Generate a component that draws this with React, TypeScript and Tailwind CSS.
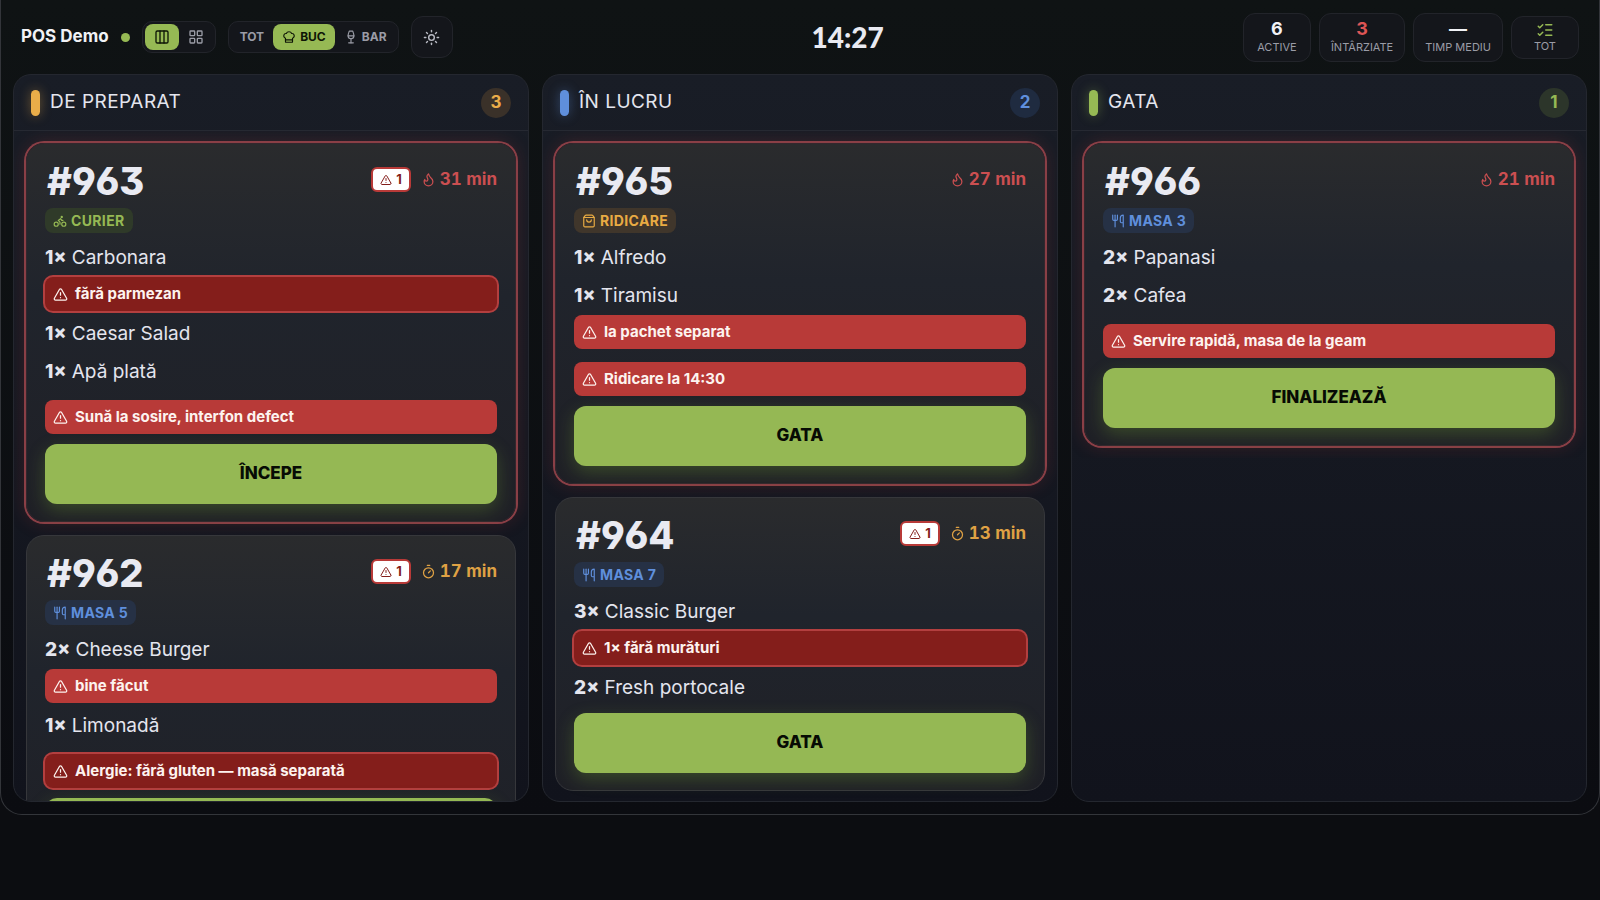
import React from "react";
import {
  Bike,
  ChefHat,
  Columns3,
  Flame,
  LayoutGrid,
  ListChecks,
  LucideIcon,
  ShoppingBag,
  Sun,
  Timer,
  TriangleAlert,
  Utensils,
  Wine,
} from "lucide-react";

type Note = { text: string; critical?: boolean };

type Order = {
  id: number;
  minutes: number;
  late?: boolean;
  alerts?: number;
  type: "courier" | "pickup" | "table";
  label: string;
  items: { qty: number; name: string; note?: Note }[];
  note?: Note;
  action: string;
};

type Column = {
  title: string;
  bar: string;
  count: string;
  orders: Order[];
  total: number;
};

const orderTypes: Record<Order["type"], { icon: LucideIcon; style: string }> = {
  courier: { icon: Bike, style: "bg-[#2f3a29] text-[#96b954]" },
  pickup: { icon: ShoppingBag, style: "bg-[#40362b] text-[#e9ab43]" },
  table: { icon: Utensils, style: "bg-[#263145] text-[#5f8fdc]" },
};

const columns: Column[] = [
  {
    title: "DE PREPARAT",
    bar: "bg-[#eaad49] shadow-[0_0_12px_rgba(234,173,73,0.4)]",
    count: "bg-[#3a3129] text-[#eaad49]",
    total: 3,
    orders: [
      {
        id: 963,
        minutes: 31,
        late: true,
        alerts: 1,
        type: "courier",
        label: "CURIER",
        items: [
          { qty: 1, name: "Carbonara", note: { text: "fără parmezan", critical: true } },
          { qty: 1, name: "Caesar Salad" },
          { qty: 1, name: "Apă plată" },
        ],
        note: { text: "Sună la sosire, interfon defect" },
        action: "ÎNCEPE",
      },
      {
        id: 962,
        minutes: 17,
        alerts: 1,
        type: "table",
        label: "MASA 5",
        items: [
          { qty: 2, name: "Cheese Burger", note: { text: "bine făcut" } },
          { qty: 1, name: "Limonadă" },
        ],
        note: { text: "Alergie: fără gluten — masă separată", critical: true },
        action: "ÎNCEPE",
      },
    ],
  },
  {
    title: "ÎN LUCRU",
    bar: "bg-[#5f8fdc] shadow-[0_0_12px_rgba(95,143,220,0.4)]",
    count: "bg-[#1f2b40] text-[#5f8fdc]",
    total: 2,
    orders: [
      {
        id: 965,
        minutes: 27,
        late: true,
        type: "pickup",
        label: "RIDICARE",
        items: [
          { qty: 1, name: "Alfredo" },
          { qty: 1, name: "Tiramisu", note: { text: "la pachet separat" } },
        ],
        note: { text: "Ridicare la 14:30" },
        action: "GATA",
      },
      {
        id: 964,
        minutes: 13,
        alerts: 1,
        type: "table",
        label: "MASA 7",
        items: [
          { qty: 3, name: "Classic Burger", note: { text: "1× fără murături", critical: true } },
          { qty: 2, name: "Fresh portocale" },
        ],
        action: "GATA",
      },
    ],
  },
  {
    title: "GATA",
    bar: "bg-[#96b954] shadow-[0_0_12px_rgba(150,185,84,0.4)]",
    count: "bg-[#2c352a] text-[#96b954]",
    total: 1,
    orders: [
      {
        id: 966,
        minutes: 21,
        late: true,
        type: "table",
        label: "MASA 3",
        items: [
          { qty: 2, name: "Papanasi" },
          { qty: 2, name: "Cafea" },
        ],
        note: { text: "Servire rapidă, masa de la geam" },
        action: "FINALIZEAZĂ",
      },
    ],
  },
];

const stats = [
  { value: "6", label: "ACTIVE", color: "text-[#f1f2f6]" },
  { value: "3", label: "ÎNTÂRZIATE", color: "text-[#dd5555]" },
  { value: "—", label: "TIMP MEDIU", color: "text-[#f1f2f6]" },
];

const NoteBar: React.FC<{ note: Note }> = ({ note }) => (
  <div
    className={`flex h-[34px] items-center gap-[7px] rounded-lg px-2 text-[15px] font-bold text-[#fdf3ef] ${
      note.critical ? "bg-[#841e1b] ring-2 ring-[#b33f3f]" : "bg-[#b83a38]"
    }`}
  >
    <TriangleAlert size={15} />
    <span>{note.text}</span>
  </div>
);

const OrderCard: React.FC<{ order: Order }> = ({ order }) => {
  const { icon: TypeIcon, style } = orderTypes[order.type];
  const TimeIcon = order.late ? Flame : Timer;

  return (
    <article
      className={`flex shrink-0 flex-col gap-2.5 rounded-[18px] border bg-linear-to-b from-[#2a2b2d] via-[#20242c] via-40% to-[#1f2026] px-[18px] py-[17px] ${
        order.late
          ? "border-[#33272d] shadow-[0_0_0_2px_#8a3f46,0_0_18px_rgba(190,60,60,0.25)]"
          : "border-[#36373b]"
      }`}
    >
      <header className="flex flex-col items-start gap-[7px]">
        <div className="flex h-10 w-full items-center justify-between">
          <h3 className="px-0.5 text-[38px] leading-10 font-extrabold text-[#e9eaf2] [font-feature-settings:'cv03','cv04','cv09']">
            #{order.id}
          </h3>
          <div className="flex items-center gap-2.5 pb-[3px]">
            {order.alerts && (
              <span className="flex h-[25px] items-center gap-1 rounded-md border-2 border-[#b83a38] bg-white px-[7px] text-[13px] font-bold text-[#841e1b]">
                <TriangleAlert size={12} />
                {order.alerts}
              </span>
            )}
            <span
              className={`flex items-center gap-1 text-[17px] font-bold tabular-nums ${
                order.late ? "text-[#cb4f51]" : "text-[#dfa144]"
              }`}
            >
              <TimeIcon size={15} />
              {order.minutes} min
            </span>
          </div>
        </div>
        <span className={`flex h-[25px] items-center gap-1 rounded-lg px-2 text-sm font-bold tracking-wide ${style}`}>
          <TypeIcon size={14} />
          {order.label}
        </span>
      </header>
      <ul className="flex flex-col gap-2">
        {order.items.map((item) => (
          <li key={item.name} className="flex flex-col gap-1">
            <span className="text-[19px] leading-[30px] text-[#e4e5ee]">
              <b className="font-extrabold">{item.qty}×</b> {item.name}
            </span>
            {item.note && <NoteBar note={item.note} />}
          </li>
        ))}
      </ul>
      {order.note && (
        <div className="pt-[3px]">
          <NoteBar note={order.note} />
        </div>
      )}
      <button className="h-[60px] rounded-xl bg-[#95b854] text-[17px] font-extrabold text-[#070b04] shadow-[0_6px_18px_rgba(120,170,50,0.3)]">
        {order.action}
      </button>
    </article>
  );
};

const Board: React.FC = () => (
  <div className="min-h-screen bg-[#0c0d11] font-['Inter',sans-serif]">
    <div className="flex h-[calc(100vh-85px)] flex-col rounded-b-[22px] border-x border-b border-[#33353a] bg-linear-to-b from-[#0f1314] to-[#0b0c11] px-3 pb-3">
      <header className="flex h-[74px] shrink-0 items-center justify-between px-2">
        <div className="flex items-center gap-3">
          <h1 className="text-[17px] font-bold text-[#f1f2f6]">POS Demo</h1>
          <span className="size-[9px] rounded-full bg-[#96b954]" />
          <div className="flex rounded-[10px] border border-[#22242a] bg-[#14161b] p-0.5">
            <button aria-label="Coloane" className="rounded-lg bg-[#96b954] px-[9px] py-[5px] text-[#0e1506]">
              <Columns3 size={16} />
            </button>
            <button aria-label="Grilă" className="rounded-lg px-[9px] py-[5px] text-[#9a9ca6]">
              <LayoutGrid size={16} />
            </button>
          </div>
          <div className="flex rounded-[10px] border border-[#22242a] bg-[#14161b] p-0.5 text-xs font-bold text-[#9a9ca6]">
            <button className="px-[9px]">TOT</button>
            <button className="flex items-center gap-1 rounded-lg bg-[#96b954] px-[9px] py-[5px] text-[#0e1506]">
              <ChefHat size={14} />
              BUC
            </button>
            <button className="flex items-center gap-1 px-[9px]">
              <Wine size={14} />
              BAR
            </button>
          </div>
          <button
            aria-label="Temă"
            className="flex size-[42px] items-center justify-center rounded-xl border border-[#22242a] bg-[#14161b] text-[#b9bbc4]"
          >
            <Sun size={17} />
          </button>
        </div>
        <time className="font-['Lato',sans-serif] text-[28px] font-black text-[#e9eaf2]">14:27</time>
        <div className="flex items-center gap-2">
          {stats.map((stat) => (
            <div
              key={stat.label}
              className="flex h-[49px] min-w-[68px] flex-col items-center justify-center rounded-xl border border-[#22242a] bg-[#14161b] px-[11px]"
            >
              <span className={`text-lg leading-5 font-bold ${stat.color}`}>{stat.value}</span>
              <span className="text-[11px] leading-4 text-[#9a9ca6]">{stat.label}</span>
            </div>
          ))}
          <button className="flex h-[43px] w-[68px] flex-col items-center justify-center rounded-xl border border-[#22242a] bg-[#14161b] text-[11px] leading-[14px] text-[#9a9ca6]">
            <ListChecks size={18} className="text-[#96b954]" />
            TOT
          </button>
        </div>
      </header>
      <main className="grid min-h-0 flex-1 grid-cols-3 gap-[13px]">
        {columns.map((column) => (
          <section
            key={column.title}
            className="flex min-h-0 flex-col overflow-hidden rounded-[18px] border border-[#24272f] bg-linear-to-b from-[#191d26] to-[#11131c]"
          >
            <header className="flex h-14 shrink-0 items-center gap-2.5 border-b border-[#262932] px-[17px]">
              <span className={`h-[26px] w-[9px] rounded-full ${column.bar}`} />
              <h2 className="flex-1 text-[19px] tracking-wide text-[#e4e5ee]">{column.title}</h2>
              <span
                className={`flex size-[30px] items-center justify-center rounded-full text-[17px] font-bold ${column.count}`}
              >
                {column.total}
              </span>
            </header>
            <div className="flex min-h-0 flex-col gap-[13px] overflow-y-auto p-3 [scrollbar-width:none]">
              {column.orders.map((order) => (
                <OrderCard key={order.id} order={order} />
              ))}
            </div>
          </section>
        ))}
      </main>
    </div>
  </div>
);

export default function App() {
  return <Board />;
}
